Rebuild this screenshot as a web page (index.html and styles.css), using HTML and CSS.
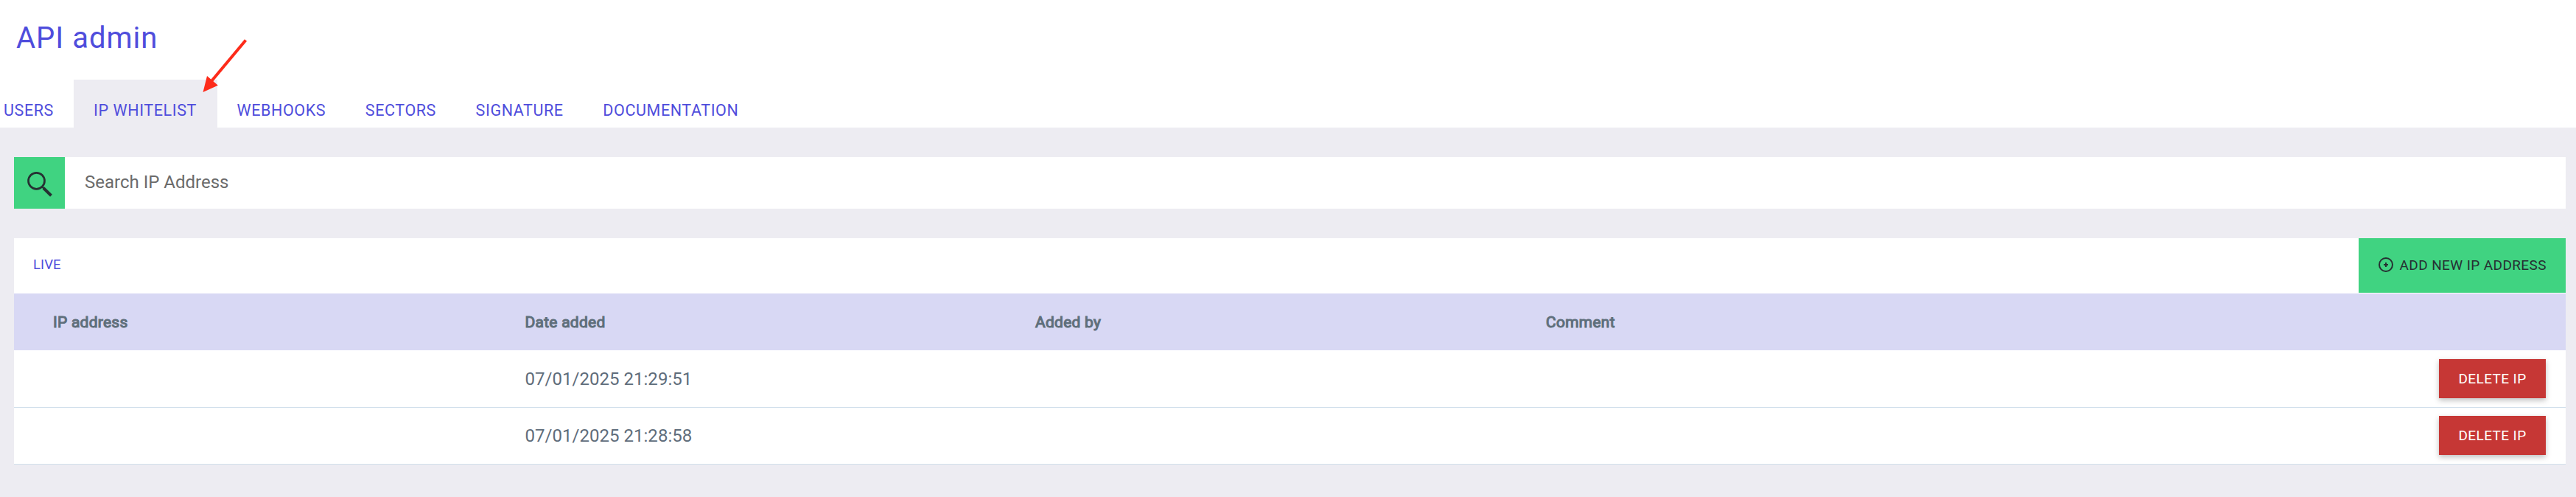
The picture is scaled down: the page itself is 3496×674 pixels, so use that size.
FILE: index.html
```
<!DOCTYPE html>
<html lang="en">
<head>
<meta charset="utf-8">
<title>API admin</title>
<link rel="stylesheet" href="styles.css">
</head>
<body>
<header class="page-header">
  <h1 class="page-title">API admin</h1>
  <nav class="tabs">
    <a class="tab tab-first">USERS</a>
    <a class="tab tab-active">IP WHITELIST</a>
    <a class="tab">WEBHOOKS</a>
    <a class="tab">SECTORS</a>
    <a class="tab">SIGNATURE</a>
    <a class="tab">DOCUMENTATION</a>
  </nav>
  <svg class="pointer" viewBox="0 0 66 76" width="66" height="76">
    <path d="M63.5 4.5 L17 60" stroke="#fd2b1a" stroke-width="4" fill="none"/>
    <path d="M5.5 75 L11 53 L25.8 65.7 Z" fill="#fd2b1a"/>
  </svg>
</header>
<main class="content">
  <div class="search">
    <button class="search-button" aria-label="Search">
      <svg viewBox="0 0 69 70" width="69" height="70" fill="none" stroke="#263032">
        <circle cx="30.5" cy="32.3" r="11" stroke-width="2.7"/>
        <path d="M38 40 L41 43" stroke-width="2.4"/>
        <path d="M40 42 L50.5 52.3" stroke-width="4"/>
      </svg>
    </button>
    <span class="search-text">Search IP Address</span>
  </div>
  <section class="panel">
    <div class="panel-bar">
      <span class="panel-label">LIVE</span>
      <button class="add-button">
        <svg viewBox="0 0 20 20" width="20" height="20" fill="none" stroke="#263032" stroke-width="2">
          <circle cx="10" cy="10" r="9"/>
          <path d="M7 10 H13 M10 7 V13"/>
        </svg>
        <span>ADD NEW IP ADDRESS</span>
      </button>
    </div>
    <div class="row row-head">
      <span>IP address</span><span>Date added</span><span>Added by</span><span>Comment</span>
    </div>
    <div class="row">
      <span></span><span>07/01/2025 21:29:51</span><span></span><span></span>
      <button class="delete-button">DELETE IP</button>
    </div>
    <div class="row">
      <span></span><span>07/01/2025 21:28:58</span><span></span><span></span>
      <button class="delete-button">DELETE IP</button>
    </div>
  </section>
</main>
</body>
</html>
```
FILE: styles.css
```
* { box-sizing: border-box; }
body {
  margin: 0;
  min-height: 674px;
  background: #edecf2;
  font-family: Roboto, sans-serif;
}
button {
  border: 0;
  padding: 0;
  font-family: inherit;
}
svg { display: block; flex: none; }

.page-header {
  position: relative;
  height: 173px;
  background: #fff;
  color: #4f4ddc;
}
.page-title {
  margin: 0;
  height: 108px;
  padding: 28px 0 0 22px;
  font-size: 40px;
  font-weight: 400;
  line-height: 48px;
  letter-spacing: 1px;
}
.tabs { display: flex; height: 65px; }
.tab {
  padding: 30px 26.6px 0 27px;
  font-size: 21.5px;
  line-height: 24px;
  letter-spacing: 0.6px;
  white-space: nowrap;
}
.tab-first { width: 100px; padding: 30px 0 0 5px; }
.tab-active { width: 194.5px; background: #edecf2; }
.pointer { position: absolute; left: 270px; top: 50px; }

.content { padding: 40px 14px 0 19px; }
.search {
  display: flex;
  height: 70px;
  background: #fff;
}
.search-button { width: 69px; background: #40d381; }
.search-text {
  padding-left: 27px;
  font-size: 24px;
  line-height: 68px;
  color: #6b6b6b;
}

.panel { margin-top: 40px; background: #fff; }
.panel-bar {
  display: flex;
  justify-content: space-between;
  height: 75px;
  padding-bottom: 1px;
}
.panel-label {
  padding-left: 26px;
  font-size: 18.5px;
  line-height: 73px;
  letter-spacing: 0.1px;
  color: #4f4ddc;
}
.add-button {
  display: flex;
  align-items: center;
  gap: 8.5px;
  width: 281px;
  padding: 0 0 2px 27px;
  background: #40d381;
  color: #263032;
  font-size: 19px;
  line-height: 24px;
  letter-spacing: 0.4px;
  white-space: nowrap;
}
.add-button span { padding-top: 2px; }

.row {
  display: grid;
  grid-template-columns: 640.5px 692.5px 693px 1fr auto;
  align-items: center;
  height: 77.5px;
  padding: 0 27px 0 53px;
  border-bottom: 1px solid #d0dfeb;
  font-size: 24px;
  letter-spacing: 0.03px;
  color: #5f6d7b;
}
.row span { padding-top: 1px; }
.row-head {
  height: 77px;
  border-bottom: 0;
  background: #d8d8f4;
  font-size: 21px;
  letter-spacing: 0.25px;
  color: #5f6f7b;
  -webkit-text-stroke: 1.1px #5f6f7b;
}
.delete-button {
  width: 145px;
  height: 53px;
  background: #c63735;
  box-shadow: 0 3px 7px rgba(0, 0, 0, 0.25);
  color: #fff;
  font-size: 19px;
  letter-spacing: 0.4px;
}
```
